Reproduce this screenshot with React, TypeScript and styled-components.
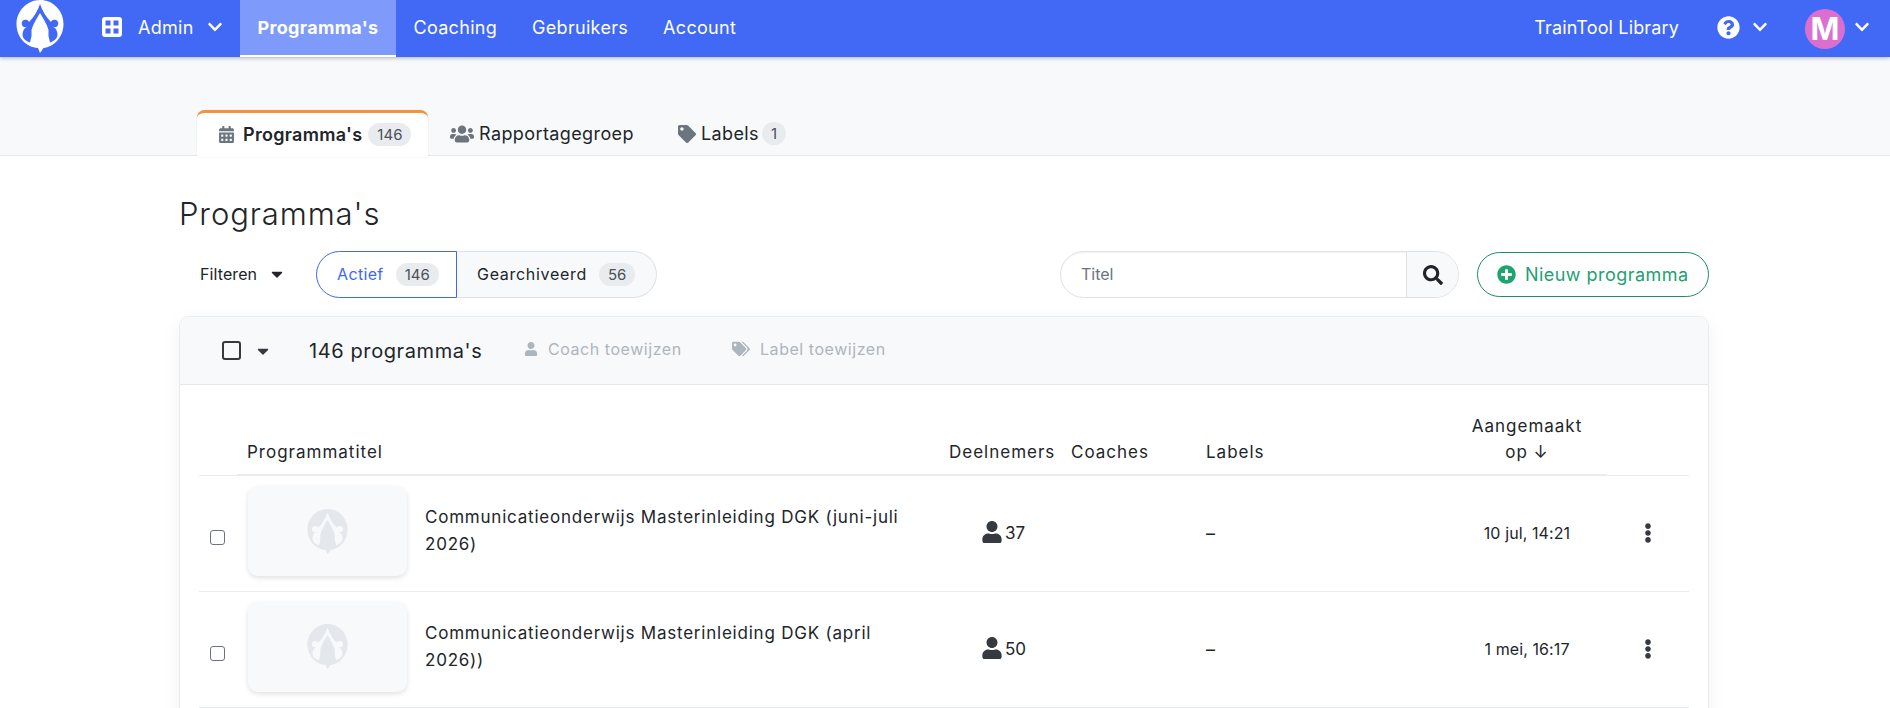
import React from 'react';
import styled, { createGlobalStyle } from 'styled-components';
import { FaCalendarAlt, FaUsers, FaTag, FaTags, FaUser, FaCaretDown, FaSearch, FaPlusCircle, FaQuestionCircle, FaEllipsisV, FaChevronDown } from 'react-icons/fa';

const Global = createGlobalStyle`
  html, body { margin: 0; padding: 0; background: #fff; }
  body { font-family: Inter, "Noto Sans", sans-serif; color: #212529; overflow: hidden; height: 708px; }
  * { box-sizing: border-box; }
`;

const Nav = styled.header`
  height: 57px; background: #4169f6; display: flex; align-items: stretch; color: #fff;
  box-shadow: 0 1px 4px rgba(0,0,0,.3); position: relative; padding-left: 16px;
`;
const LogoBox = styled.div`width: 48px; margin-right: 38px; flex: none;`;
const NavItem = styled.div<{ $active?: boolean }>`
  display: flex; align-items: center; font-size: 18px; letter-spacing: .3px; padding: 0 17.5px 3px;
  background: ${p => p.$active ? '#7e9afa' : 'transparent'};
  font-weight: ${p => p.$active ? 700 : 400};
  border-bottom: ${p => p.$active ? '2px solid #fff' : '0'};
  ${p => p.$active ? 'width: 156px; justify-content: center; padding: 0 0 1px;' : ''}
`;
const AdminItem = styled(NavItem)`gap: 16px; padding: 0 0 3px; width: 138px; flex: none; svg { flex: none; }`;
const Spacer = styled.div`flex: 1;`;
const NavRight = styled.div`display: flex; align-items: center; padding: 0 20px 3px 0; font-size: 18px; letter-spacing: .15px;`;
const Help = styled.span`display: flex; margin-left: 38px; margin-right: 12px;`;
const Avatar = styled.span`
  width: 40px; height: 40px; border-radius: 50%; background: #db6fd0; margin: 3px 9px 0 37px;
  display: flex; align-items: center; justify-content: center; font-weight: 700; font-size: 31px; color: #fff;
`;

const TabBar = styled.div`
  height: 99px; background: #f8f9fb; border-bottom: 1px solid #e5e7ea; padding: 53px 0 0 197px; display: flex; align-items: flex-start;
`;
const Tab = styled.div<{ $active?: boolean }>`
  height: 47px; display: flex; align-items: center; gap: ${p => p.$active ? '8px' : '5px'}; font-size: 18px; letter-spacing: .4px;
  color: #212529; padding: ${p => p.$active ? '0 0 2px 21px' : '0 22px 0 22px'};
  font-weight: ${p => p.$active ? 600 : 400};
  ${p => p.$active ? `background:#fff;border-top:3px solid #f5923e;border-radius:8px 8px 0 0;box-shadow:0 0 1px rgba(0,0,0,.25);width:231px;letter-spacing:.3px;` : ''}
  svg { color: #6c757d; flex: none; }
`;
const Badge = styled.span`
  display: inline-flex; align-items: center; justify-content: center; height: 23px; min-width: 22px; padding: 0 9px; border-radius: 12px;
  background: #e9ecef; color: #495057; font-size: 15px; font-weight: 400; letter-spacing: 0;
`;
const TabBadge = styled(Badge)`margin-left: -2px;`;

const Main = styled.main`padding: 0 181px 0 179px;`;
const Title = styled.h1`font-size: 31px; font-weight: 300; margin: 38px 0 0; line-height: 40px; height: 40px; letter-spacing: .9px; color: #212529;`;
const Toolbar = styled.div`display: flex; align-items: center; margin-top: 17px; height: 47px;`;
const Filter = styled.div`display: flex; align-items: center; gap: 11px; margin-left: 21px; width: 116px; font-size: 16px; letter-spacing: .1px; padding-bottom: 1px; svg { flex: none; }`;
const Segments = styled.div`display: flex; height: 47px;`;
const Segment = styled.div<{ $active?: boolean }>`
  display: flex; align-items: center; gap: 12px; font-size: 16px; letter-spacing: ${p => p.$active ? '.35px' : '.7px'};
  background: ${p => p.$active ? '#fff' : '#f8f9fb'}; color: ${p => p.$active ? '#3f68f5' : '#212529'};
  border: 1px solid ${p => p.$active ? '#3f68f5' : '#dee2e6'};
  border-radius: ${p => p.$active ? '24px 0 0 24px' : '0 24px 24px 0'};
  width: ${p => p.$active ? '141px' : '200px'};
  padding-left: 20px; padding-bottom: 1px;
  ${p => p.$active ? '' : 'border-left: 0;'}
`;
const Search = styled.div`
  margin-left: auto; width: 399px; height: 47px; border: 1px solid #dee2e6; border-radius: 24px; display: flex; overflow: hidden;
  box-shadow: inset 0 1px 2px rgba(0,0,0,.06);
`;
const SearchText = styled.div`flex: 1; display: flex; align-items: center; padding: 0 0 1px 20px; font-size: 16px; color: #6c757d;`;
const SearchBtn = styled.div`width: 52px; border-left: 1px solid #dee2e6; background: #f8f9fb; display: flex; align-items: center; justify-content: center;`;
const NewBtn = styled.div`
  margin-left: 18px; width: 232px; height: 45px; border: 1px solid #198f68; border-radius: 23px; color: #1f9f73;
  display: flex; align-items: center; gap: 9px; padding: 0 0 1px 19px; font-size: 18px; letter-spacing: .45px; svg { flex: none; }
`;

const Card = styled.section`
  margin-top: 18px; border: 1px solid #e9ecef; border-radius: 10px 10px 0 0; box-shadow: 0 4px 20px rgba(0,0,0,.05); height: 500px; background: #fff;
`;
const CardHead = styled.div`
  height: 68px; background: #f8f9fb; border-bottom: 1px solid #e5e7ea; border-radius: 10px 10px 0 0; display: flex; align-items: center; padding-left: 42px;
`;
const BigBox = styled.span`width: 19px; height: 19px; border: 2px solid #343a40; border-radius: 3px; flex: none;`;
const CaretWrap = styled.span`display: flex; margin-left: 13px; width: 55px; flex: none;`;
const Count = styled.span`font-size: 20px; letter-spacing: .6px; width: 215px; flex: none;`;
const Assign = styled.span<{ $w: number }>`
  display: flex; align-items: center; gap: 10px; color: #adb5bd; font-size: 16px; letter-spacing: .55px; width: ${p => p.$w}px; flex: none; padding-bottom: 3px;
`;

const Table = styled.table`
  border-collapse: collapse; table-layout: fixed; width: 1490px; margin: 0 0 0 19px; font-size: 17px; letter-spacing: 1px;
`;
const Th = styled.th<{ $align?: string; $thin?: boolean; $pad?: number }>`
  height: 90px; vertical-align: bottom; font-weight: 400; padding: 0 0 9px ${p => p.$pad ?? 0}px; text-align: ${p => p.$align ?? 'left'}; line-height: 26px;
  border-bottom: ${p => p.$thin ? '1px solid #e9ecef' : '2px solid #e9ecef'};
`;
const Td = styled.td<{ $align?: string; $pad?: number }>`
  height: 116px; border-bottom: 1px solid #e9ecef; text-align: ${p => p.$align ?? 'left'}; padding: 0 0 0 ${p => p.$pad ?? 0}px; vertical-align: middle;
`;
const Check = styled.span`display: block; width: 15px; height: 15px; margin: 8px 0 0 11px; border: 1px solid #6c757d; border-radius: 3px; background: #fff;`;
const ProgramCell = styled.div`display: flex; align-items: center; gap: 18px; padding-left: 11px; margin-top: -4px;`;
const Thumb = styled.div`
  width: 159px; height: 90px; flex: none; background: #f8f9fa; border-radius: 10px; box-shadow: 0 2px 5px rgba(0,0,0,.12);
  display: flex; align-items: center; justify-content: center;
`;
const ProgramName = styled.div`font-size: 17px; line-height: 27px; letter-spacing: .78px; width: 490px;`;
const People = styled.div`display: flex; align-items: center; gap: 2px; padding-left: 32px; font-size: 17px; letter-spacing: 0; svg { flex: none; margin-top: -2px; }`;
const Dash = styled.span`font-size: 18px; letter-spacing: 0;`;
const DateText = styled.span`font-size: 16px; letter-spacing: .1px;`;
const Kebab = styled.div`display: flex; justify-content: center;`;

const GridIcon = () => (
  <svg width="20" height="20" viewBox="0 0 20 20">
    <path fillRule="evenodd" d="M3 0h14a3 3 0 0 1 3 3v14a3 3 0 0 1-3 3H3a3 3 0 0 1-3-3V3a3 3 0 0 1 3-3ZM3.500 3.500v5h5v-5ZM11.500 3.500v5h5v-5ZM3.500 11.500v5h5v-5ZM11.500 11.500v5h5v-5Z" fill="#fff" />
  </svg>
);

const Logo: React.FC<{ size: number; bg: string; fg: string }> = ({ size, bg, fg }) => (
  <svg width={size} height={size * 53 / 48} viewBox="0 0 48 53">
    <path d="M24 0C37 0 47.500 10.500 47.500 24S37.500 47 27.500 48L24 53L22 48C10 47.500 .5 37 .5 24S11 0 24 0Z" fill={bg} />
    <path d="M24 4C22 10 18 17 13 22C12 24 12 26 11 27C8 28 6.500 31 6.500 35C7 39 10 41 14 42.500L15.500 36L15.500 30C17 24 21 18 24 13C27 18 31 24 32.500 30L32.500 36L34 42.500C38 41 41 39 41.500 35C41.500 31 40 28 37 27C36 26 36 24 35 22C30 17 26 10 24 4Z" fill={fg} />
    <circle cx="9.500" cy="23.500" r="3.700" fill={fg} />
    <circle cx="38.500" cy="23.500" r="3.700" fill={fg} />
  </svg>
);

const Row: React.FC<{ name: string; count: string; date: string }> = ({ name, count, date }) => (
  <tr>
    <Td><Check /></Td>
    <Td>
      <ProgramCell>
        <Thumb><Logo size={41} bg="#e4e8ec" fg="#f8f9fa" /></Thumb>
        <ProgramName>{name}</ProgramName>
      </ProgramCell>
    </Td>
    <Td>
      <People><FaUser size={22} color="#343a40" />{count}</People>
    </Td>
    <Td />
    <Td><Dash>–</Dash></Td>
    <Td $align="center"><DateText>{date}</DateText></Td>
    <Td><Kebab><FaEllipsisV size={20} color="#343a40" /></Kebab></Td>
  </tr>
);

export default function App() {
  return (
    <>
      <Global />
      <Nav>
        <LogoBox><Logo size={48} bg="#fff" fg="#4169f6" /></LogoBox>
        <AdminItem>
          <GridIcon />
          <span>Admin</span>
          <FaChevronDown size={16} style={{ marginLeft: -3 }} />
        </AdminItem>
        <NavItem $active>Programma's</NavItem>
        <NavItem>Coaching</NavItem>
        <NavItem>Gebruikers</NavItem>
        <NavItem>Account</NavItem>
        <Spacer />
        <NavRight>
          <span>TrainTool Library</span>
          <Help><FaQuestionCircle size={23} /></Help>
          <FaChevronDown size={16} />
          <Avatar>M</Avatar>
          <FaChevronDown size={16} />
        </NavRight>
      </Nav>
      <TabBar>
        <Tab $active><FaCalendarAlt size={17} />Programma's<TabBadge>146</TabBadge></Tab>
        <Tab><FaUsers size={24} />Rapportagegroep</Tab>
        <Tab><FaTag size={18} />Labels<TabBadge>1</TabBadge></Tab>
      </TabBar>
      <Main>
        <Title>Programma's</Title>
        <Toolbar>
          <Filter>Filteren<FaCaretDown size={18} /></Filter>
          <Segments>
            <Segment $active>Actief<Badge>146</Badge></Segment>
            <Segment>Gearchiveerd<Badge>56</Badge></Segment>
          </Segments>
          <Search>
            <SearchText>Titel</SearchText>
            <SearchBtn><FaSearch size={20} color="#212529" /></SearchBtn>
          </Search>
          <NewBtn><FaPlusCircle size={19} color="#1fa471" />Nieuw programma</NewBtn>
        </Toolbar>
        <Card>
          <CardHead>
            <BigBox />
            <CaretWrap><FaCaretDown size={18} color="#343a40" /></CaretWrap>
            <Count>146 programma's</Count>
            <Assign $w={208}><FaUser size={14} />Coach toewijzen</Assign>
            <Assign $w={170}><FaTags size={18} />Label toewijzen</Assign>
          </CardHead>
          <Table>
            <colgroup>
              <col width="38" /><col width="712" /><col width="122" /><col width="135" /><col width="242" /><col width="158" /><col width="83" />
            </colgroup>
            <thead>
              <tr>
                <Th $thin />
                <Th $pad={10}>Programmatitel</Th>
                <Th>Deelnemers</Th>
                <Th>Coaches</Th>
                <Th>Labels</Th>
                <Th $align="center">Aangemaakt<br />op ↓</Th>
                <Th $thin />
              </tr>
            </thead>
            <tbody>
              <Row name="Communicatieonderwijs Masterinleiding DGK (juni-juli 2026)" count="37" date="10 jul, 14:21" />
              <Row name="Communicatieonderwijs Masterinleiding DGK (april 2026))" count="50" date="1 mei, 16:17" />
            </tbody>
          </Table>
        </Card>
      </Main>
    </>
  );
}
